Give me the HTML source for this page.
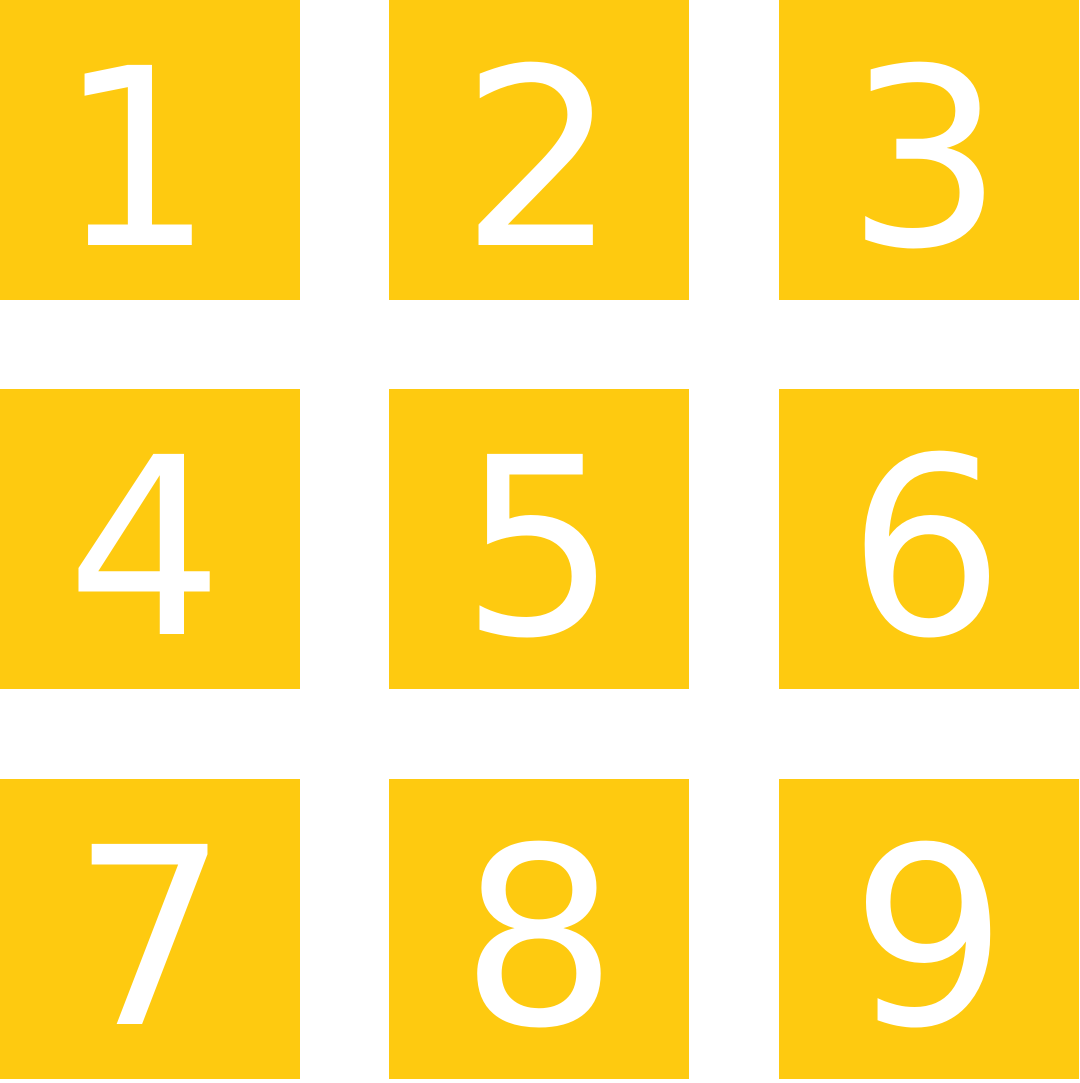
<!DOCTYPE html>
<html><head><meta charset="utf-8"><style>
html,body{margin:0;padding:0;background:#fff;width:1080px;height:1080px;overflow:hidden}
.b{position:absolute;width:300px;height:300px;background:#FECA10}
.b span{position:absolute;left:0;width:300px;top:37px;text-align:center;color:#fff;font-family:"DejaVu Sans","Liberation Sans",sans-serif;font-size:247px;line-height:247px}
</style></head><body>
<div class="b" style="left:0;top:0"><span style="left:-14px">1</span></div>
<div class="b" style="left:389px;top:0"><span>2</span></div>
<div class="b" style="left:779px;top:0"><span style="left:-4px">3</span></div>
<div class="b" style="left:0;top:389px"><span style="left:-5px">4</span></div>
<div class="b" style="left:389px;top:389px"><span>5</span></div>
<div class="b" style="left:779px;top:389px"><span style="left:-3px">6</span></div>
<div class="b" style="left:0;top:779px"><span>7</span></div>
<div class="b" style="left:389px;top:779px"><span>8</span></div>
<div class="b" style="left:779px;top:779px"><span>9</span></div>
</body></html>
